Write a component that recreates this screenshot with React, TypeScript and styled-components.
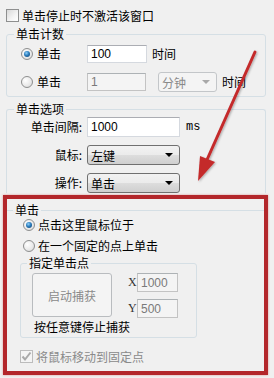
import React from "react";
import styled, {createGlobalStyle, css} from "styled-components";

const GlobalStyle = createGlobalStyle`
    html, body {
        margin: 0;
        padding: 0;
        background: #f0f0f0;
    }
    body {
        font-family: "Noto Sans CJK SC", "Liberation Sans", sans-serif;
        font-size: 12px;
        color: #000;
    }
`;

//============ BASIC CONTROLS ====================
const Page = styled.div`
    position: relative;
    width: 274px;
    height: 378px;
    display: flex;
    flex-direction: column;
    background: #f0f0f0;
    overflow: hidden;
`;

const CheckBox = styled.span<{ $disabled?: boolean }>`
    width: 13px;
    height: 13px;
    box-sizing: border-box;
    flex-shrink: 0;
    border: 1px solid ${p => p.$disabled ? "#bcbcbc" : "#8e8f8f"};
    background: ${p => p.$disabled
        ? "#f4f4f4"
        : "linear-gradient(135deg, #d8d8d8 0%, #f4f4f4 60%, #ffffff 100%)"};
    display: flex;
    align-items: center;
    justify-content: center;
`;

const Radio = styled.span<{ $checked?: boolean }>`
    width: 12px;
    height: 12px;
    box-sizing: border-box;
    flex-shrink: 0;
    border-radius: 50%;
    border: 1px solid #8e8f8f;
    background: radial-gradient(circle at 35% 35%, #ffffff 0%, #e8e8e8 60%, #cfcfcf 100%);
    display: flex;
    align-items: center;
    justify-content: center;
    ${p => p.$checked && css`
        &::after {
            content: "";
            width: 6px;
            height: 6px;
            border-radius: 50%;
            background: radial-gradient(circle at 40% 35%, #8fd0fa 0%, #2c7dbd 45%, #0d3a66 100%);
        }
    `}
`;

const TextBox = styled.div<{ $w: number; $h?: number; $disabled?: boolean }>`
    width: ${p => p.$w}px;
    height: ${p => p.$h ?? 18}px;
    box-sizing: border-box;
    flex-shrink: 0;
    display: flex;
    align-items: center;
    padding-left: 3px;
    font-family: "Liberation Sans", "Noto Sans CJK SC", sans-serif;
    font-size: 12px;
    border: 1px solid ${p => p.$disabled ? "#c3c3c3" : "#d5d9df"};
    border-top-color: ${p => p.$disabled ? "#adb2b5" : "#abadb3"};
    background: ${p => p.$disabled ? "#f4f4f4" : "#ffffff"};
    color: ${p => p.$disabled ? "#7a7a7a" : "#000"};
`;

const SelectBox = styled.div<{ $w: number; $h?: number; $disabled?: boolean }>`
    width: ${p => p.$w}px;
    height: ${p => p.$h ?? 20}px;
    box-sizing: border-box;
    flex-shrink: 0;
    display: flex;
    align-items: center;
    justify-content: space-between;
    padding: 0 6px 0 3px;
    border-radius: 3px;
    ${p => p.$disabled ? css`
        border: 1px solid #c3c6c9;
        background: #f4f4f4;
        color: #8a8a8a;
    ` : css`
        border: 1px solid #707070;
        background: linear-gradient(#f2f2f2 0%, #ebebeb 50%, #dddddd 51%, #cfcfcf 100%);
        color: #000;
    `}
`;

const DropArrow = styled.span<{ $disabled?: boolean }>`
    width: 0;
    height: 0;
    border-left: 4px solid transparent;
    border-right: 4px solid transparent;
    border-top: 4px solid ${p => p.$disabled ? "#a8a8a8" : "#000"};
`;

const Text = styled.span<{ $gray?: boolean }>`
    line-height: 14px;
    white-space: nowrap;
    color: ${p => p.$gray ? "#8a8a8a" : "#000"};
`;

//============ GROUPS ====================
const Group = styled.fieldset<{ $open?: boolean; $flat?: boolean }>`
    margin: 5px 8px 0 6px;
    padding: 0;
    min-width: 0;
    display: flex;
    flex-direction: column;
    border: 1px solid #d5dfe5;
    border-radius: 3px;
    ${p => p.$open && css`
        border-bottom: none;
        border-radius: 3px 3px 0 0;
    `}
    ${p => p.$flat && css`
        margin: 4px 0 0 0;
        border-left: none;
        border-right: none;
        border-bottom: none;
        border-radius: 0;
    `}
`;

const Legend = styled.legend<{ $x: number }>`
    margin-left: ${p => p.$x}px;
    padding: 0 2px;
    height: 14px;
    line-height: 14px;
`;

const Rows = styled.div<{ $pad: string; $gap: number }>`
    display: flex;
    flex-direction: column;
    padding: ${p => p.$pad};
    gap: ${p => p.$gap}px;
`;

const Row = styled.div<{ $h: number }>`
    display: flex;
    align-items: center;
    height: ${p => p.$h}px;
`;

const Choice = styled.div<{ $w?: number; $gap?: number }>`
    display: flex;
    align-items: center;
    gap: ${p => p.$gap ?? 4}px;
    width: ${p => p.$w ? `${p.$w}px` : "auto"};
    flex-shrink: 0;
`;

const Unit = styled.span<{ $x: number; $mono?: boolean }>`
    margin-left: ${p => p.$x}px;
    line-height: 14px;
    ${p => p.$mono && css`
        font-family: "Liberation Mono", monospace;
        font-size: 12px;
    `}
`;

const FieldLabel = styled.span`
    width: 60px;
    margin-right: 5px;
    text-align: right;
    line-height: 14px;
    flex-shrink: 0;
`;

const TopRow = styled.label`
    display: flex;
    align-items: center;
    gap: 3px;
    height: 13px;
    margin-top: 9px;
    padding-left: 6px;
`;

//============ HIGHLIGHTED PART ====================
const RedFrame = styled.div`
    margin: 2px 6px 0 3px;
    height: 180px;
    box-sizing: border-box;
    border: 4px solid #b3272b;
    box-shadow: 0 0 2px rgba(200, 40, 40, 0.45);
    display: flex;
    flex-direction: column;
`;

const PointGroup = styled.fieldset`
    margin: 3px 0 0 13px;
    padding: 0;
    width: 177px;
    box-sizing: border-box;
    min-width: 0;
    border: 1px solid #d5dfe5;
    border-radius: 3px;
    display: flex;
    flex-direction: column;
`;

const PointBody = styled.div`
    display: flex;
    flex-direction: column;
    padding: 3px 0 3px 11px;
`;

const PointTop = styled.div`
    display: flex;
    gap: 16px;
`;

const CaptureButton = styled.div`
    width: 80px;
    height: 44px;
    box-sizing: border-box;
    border: 1px solid #b9bcbf;
    border-radius: 3px;
    background: #f4f4f4;
    color: #8a8a8a;
    display: flex;
    align-items: center;
    justify-content: center;
`;

const CoordCol = styled.div`
    display: flex;
    flex-direction: column;
    gap: 7px;
`;

const CoordRow = styled.div`
    display: flex;
    align-items: center;
`;

const CoordLabel = styled.span`
    width: 9px;
    font-family: "Liberation Serif", serif;
    font-size: 12px;
    color: #333;
`;

const Caption = styled.span`
    margin: 2px 0 0 2px;
    line-height: 14px;
`;

const MoveRow = styled.div`
    display: flex;
    align-items: center;
    gap: 3px;
    height: 13px;
    margin: 12px 0 0 13px;
`;

const Annotation = styled.svg`
    position: absolute;
    left: 0;
    top: 0;
    pointer-events: none;
`;

//============== COMPONENT =================
const App: React.FC = () => {
    return (
        <Page>
            <GlobalStyle/>
            <TopRow>
                <CheckBox/>
                <Text>单击停止时不激活该窗口</Text>
            </TopRow>

            <Group>
                <Legend $x={7}>单击计数</Legend>
                <Rows $pad="4px 0 5px 14px" $gap={10}>
                    <Row $h={18}>
                        <Choice $w={66}><Radio $checked/><Text>单击</Text></Choice>
                        <TextBox $w={60}>100</TextBox>
                        <Unit $x={5}>时间</Unit>
                    </Row>
                    <Row $h={18}>
                        <Choice $w={66}><Radio/><Text>单击</Text></Choice>
                        <TextBox $w={59} $disabled>1</TextBox>
                        <SelectBox $w={59} $disabled style={{marginLeft: 12}}>
                            <span>分钟</span><DropArrow $disabled/>
                        </SelectBox>
                        <Unit $x={5}>时间</Unit>
                    </Row>
                </Rows>
            </Group>

            <Group $open>
                <Legend $x={7}>单击选项</Legend>
                <Rows $pad="1px 0 0 15px" $gap={8}>
                    <Row $h={20}>
                        <FieldLabel>单击间隔:</FieldLabel>
                        <TextBox $w={93} $h={20}>1000</TextBox>
                        <Unit $x={6} $mono>ms</Unit>
                    </Row>
                    <Row $h={20}>
                        <FieldLabel>鼠标:</FieldLabel>
                        <SelectBox $w={93}><span>左键</span><DropArrow/></SelectBox>
                    </Row>
                    <Row $h={20}>
                        <FieldLabel>操作:</FieldLabel>
                        <SelectBox $w={93}><span>单击</span><DropArrow/></SelectBox>
                    </Row>
                </Rows>
            </Group>

            <RedFrame>
                <Group $flat>
                    <Legend $x={6}>单击</Legend>
                    <Rows $pad="1px 0 0 16px" $gap={7}>
                        <Row $h={14}>
                            <Choice $gap={3}><Radio $checked/><Text>点击这里鼠标位于</Text></Choice>
                        </Row>
                        <Row $h={14}>
                            <Choice $gap={3}><Radio/><Text>在一个固定的点上单击</Text></Choice>
                        </Row>
                    </Rows>
                    <PointGroup>
                        <Legend $x={6}>指定单击点</Legend>
                        <PointBody>
                            <PointTop>
                                <CaptureButton>启动捕获</CaptureButton>
                                <CoordCol>
                                    <CoordRow>
                                        <CoordLabel>X</CoordLabel>
                                        <TextBox $w={41} $h={19} $disabled>1000</TextBox>
                                    </CoordRow>
                                    <CoordRow>
                                        <CoordLabel>Y</CoordLabel>
                                        <TextBox $w={41} $h={19} $disabled>500</TextBox>
                                    </CoordRow>
                                </CoordCol>
                            </PointTop>
                            <Caption>按任意键停止捕获</Caption>
                        </PointBody>
                    </PointGroup>
                    <MoveRow>
                        <CheckBox $disabled>
                            <svg width="11" height="11" viewBox="0 0 11 11">
                                <polyline points="1.5,5.5 4,8.5 9.5,1.5" fill="none" stroke="#a9a9a9"
                                          strokeWidth="2"/>
                            </svg>
                        </CheckBox>
                        <Text $gray>将鼠标移动到固定点</Text>
                    </MoveRow>
                </Group>
            </RedFrame>

            <Annotation width={274} height={378} viewBox="0 0 274 378">
                <defs>
                    <filter id="soft" x="-20%" y="-20%" width="140%" height="140%">
                        <feDropShadow dx="1" dy="1" stdDeviation="1" floodColor="#000" floodOpacity="0.3"/>
                    </filter>
                </defs>
                <g filter="url(#soft)">
                    <line x1="255" y1="52" x2="206" y2="162" stroke="#c42a2c" strokeWidth="3"
                          strokeLinecap="round"/>
                    <polygon points="198,181 200,156 215,162" fill="#c42a2c"/>
                </g>
            </Annotation>
        </Page>
    );
};

export default App;
